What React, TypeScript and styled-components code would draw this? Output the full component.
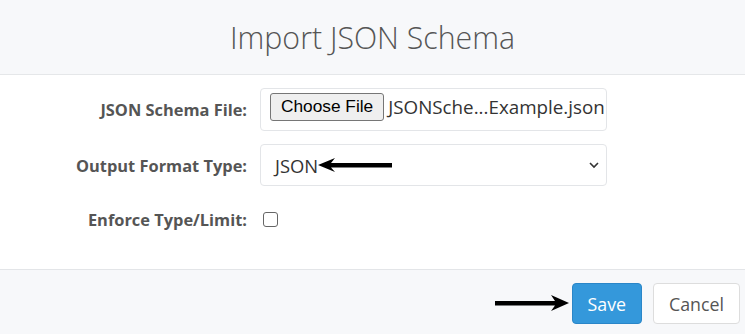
import React from 'react'
import styled, { createGlobalStyle } from 'styled-components'

const GlobalStyle = createGlobalStyle`
  html, body {
    margin: 0;
    padding: 0;
    background: #FFF;
  }
`;

const Modal = styled.div`
  width: 745px;
  height: 334px;
  font-family: 'Open Sans', sans-serif;
  color: #555;
  display: flex;
  flex-direction: column;
  overflow: hidden;
`;

const Header = styled.div`
  height: 74px;
  background: #F7F8FA;
  border-bottom: 1px solid #E5E7E9;
  display: flex;
  align-items: center;
  justify-content: center;

  & h1 {
    margin: 0;
    font-size: 30.3px;
    font-weight: 300;
    color: #555;
  }
`;

const Body = styled.div`
  height: 194px;
  background: #FFF;
  padding-top: 13px;
  box-sizing: border-box;
  display: grid;
  grid-template-columns: 247px 347px;
  column-gap: 13px;
  row-gap: 13px;
  align-content: start;
  align-items: center;
`;

const Label = styled.label`
  text-align: right;
  font-size: 16.4px;
  font-weight: 700;
  color: #555;
`;

const Field = styled.div`
  position: relative;
  height: 43px;
  box-sizing: border-box;
  border: 1px solid #E3E5E8;
  border-radius: 4px;
  background: #FFF;
  display: flex;
  align-items: center;
  padding: 0 0 5px 9px;
  font-size: 18.8px;
  color: #333;
  white-space: nowrap;
  overflow: hidden;
`;

const SelectField = styled(Field)`
  padding: 0 0 0 14px;
  height: 42px;
  font-size: 18.4px;
`;

const FileButton = styled.span`
  flex-shrink: 0;
  font-family: 'Liberation Sans', Arial, sans-serif;
  font-size: 17.3px;
  color: #000;
  background: #EFEFEF;
  border: 1px solid #767676;
  border-radius: 3px;
  padding: 2px 10px 3px;
  margin-right: 4px;
`;

const Chevron = styled.svg`
  position: absolute;
  right: 6px;
  top: 15px;
`;

const Arrow = styled.svg`
  display: block;
  flex-shrink: 0;
`;

const CheckRow = styled.div`
  height: 40px;
  display: flex;
  align-items: center;
`;

const CheckBox = styled.span`
  display: block;
  width: 13px;
  height: 13px;
  margin-left: 3px;
  border: 1.5px solid #666;
  border-radius: 3px;
`;

const Footer = styled.div`
  flex: 1;
  background: #F7F8FA;
  border-top: 1px solid #E3E5E8;
  display: flex;
  align-items: flex-start;
  justify-content: flex-end;
  padding: 13px 5px 0 0;
  gap: 11px;
`;

const FooterArrow = styled.div`
  align-self: center;
  margin-top: -12px;
  margin-right: -8px;
`;

const Button = styled.button<{ $primary?: boolean }>`
  height: 41px;
  padding: 0 15px;
  border-radius: 4px;
  font-family: 'Open Sans', sans-serif;
  font-size: 17.8px;
  border: 1px solid ${p => (p.$primary ? '#2A86C8' : '#DDD')};
  background: ${p => (p.$primary ? '#3498DB' : '#FFF')};
  color: ${p => (p.$primary ? '#FFF' : '#555')};
`;

const LeftArrow = () => (
  <Arrow width="74" height="14" viewBox="0 0 74 14">
    <polygon points="0,7 17,0 13,5 74,5 74,9.5 13,9.5 17,14" fill="#000" />
  </Arrow>
);

const RightArrow = () => (
  <Arrow width="74" height="16" viewBox="0 0 74 16">
    <polygon points="74,8 56,0 60,6 0,6 0,10.5 60,10.5 56,16" fill="#000" />
  </Arrow>
);

const App = () => {
  return (
    <Modal>
      <GlobalStyle />
      <Header>
        <h1>Import JSON Schema</h1>
      </Header>
      <Body>
        <Label>JSON Schema File:</Label>
        <Field>
          <FileButton>Choose File</FileButton>
          JSONSche...Example.json
        </Field>
        <Label>Output Format Type:</Label>
        <SelectField>
          JSON
          <LeftArrow />
          <Chevron width="12" height="10" viewBox="0 0 12 10">
            <polyline points="2,3 6,7 10,3" fill="none" stroke="#333" strokeWidth="1.6" />
          </Chevron>
        </SelectField>
        <Label>Enforce Type/Limit:</Label>
        <CheckRow>
          <CheckBox />
        </CheckRow>
      </Body>
      <Footer>
        <FooterArrow>
          <RightArrow />
        </FooterArrow>
        <Button $primary>Save</Button>
        <Button>Cancel</Button>
      </Footer>
    </Modal>
  )
}

export default App
